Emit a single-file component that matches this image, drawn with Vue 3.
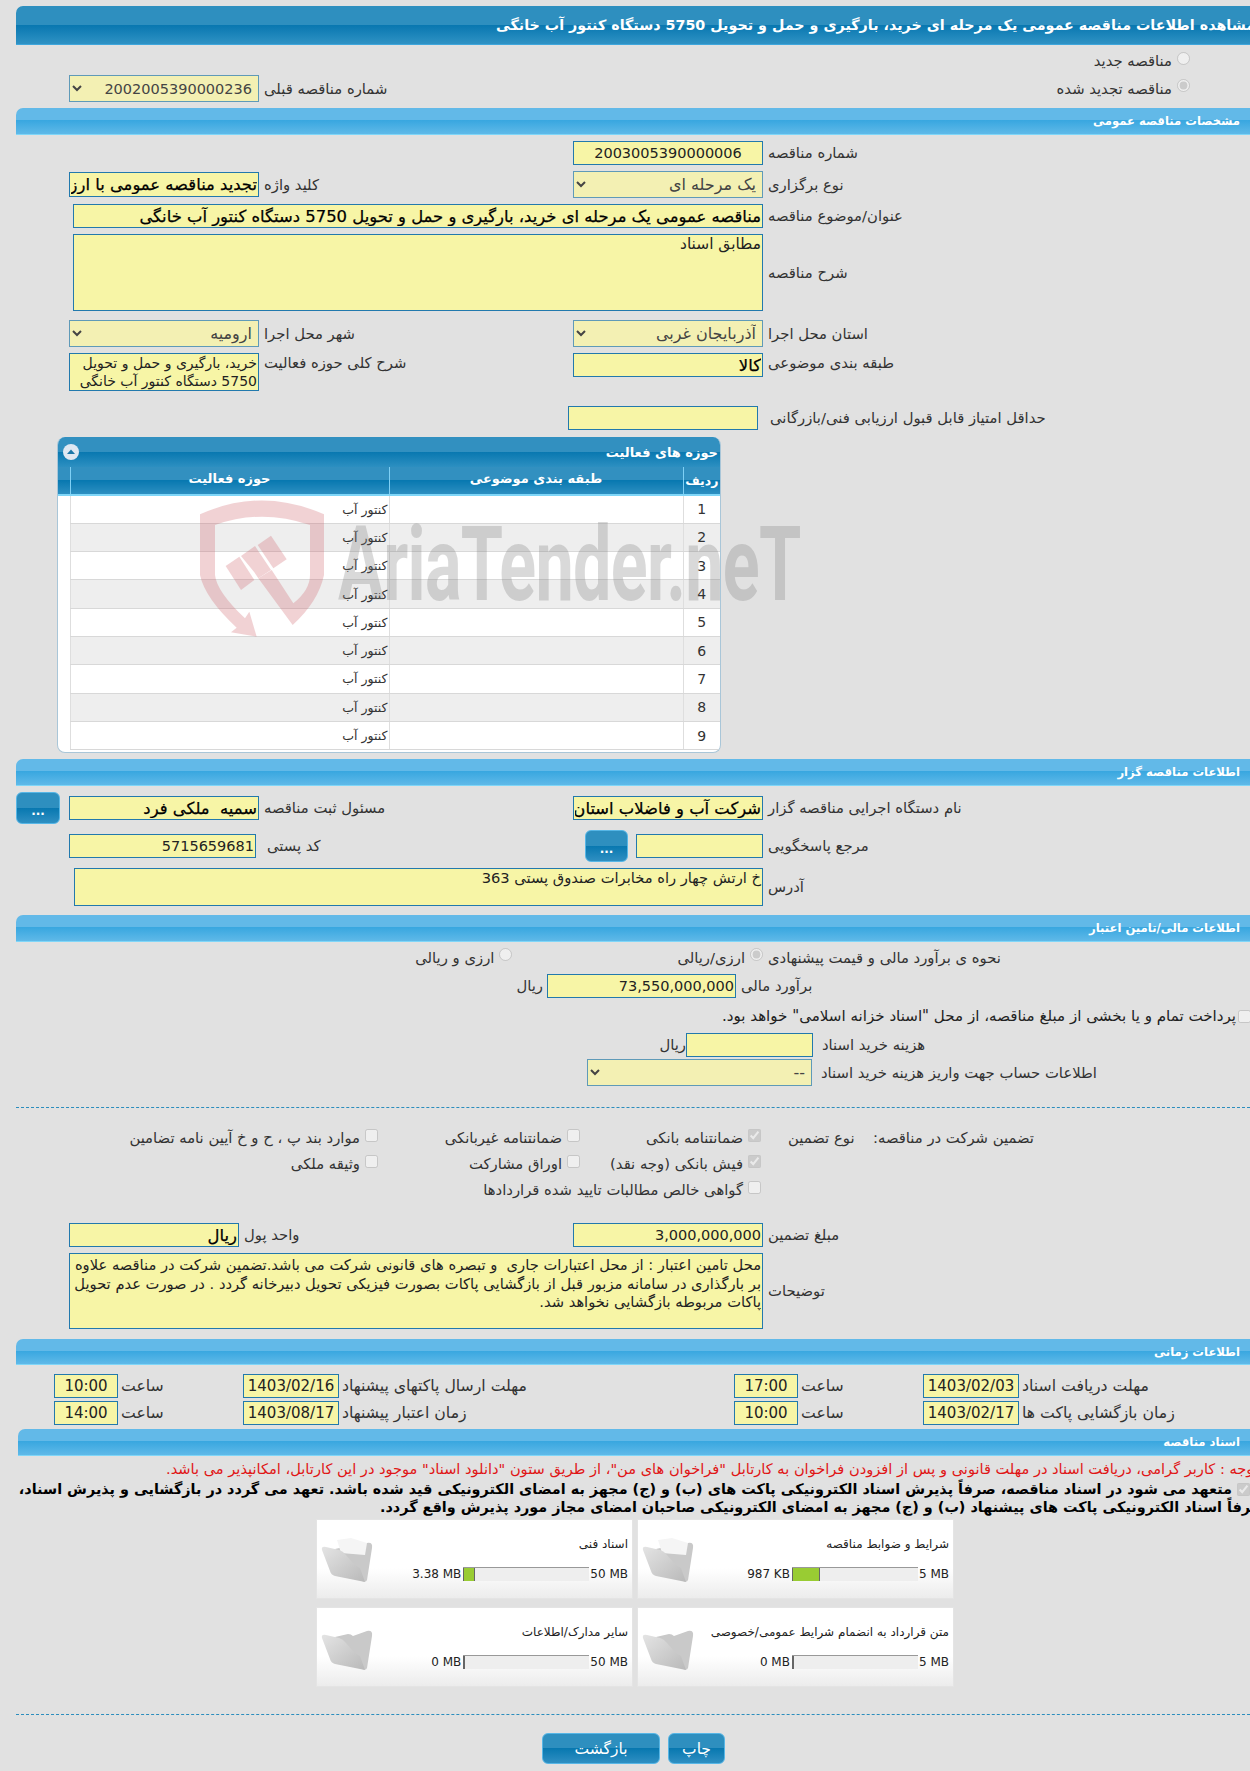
<script setup>
const rows = [1, 2, 3, 4, 5, 6, 7, 8, 9]
const cards = [
  [
    { title: 'شرایط و ضوابط مناقصه', used: '987 KB', max: '5 MB', fill: 26, paper: true },
    { title: 'اسناد فنی', used: '3.38 MB', max: '50 MB', fill: 10, paper: true }
  ],
  [
    { title: 'متن قرارداد به انضمام شرایط عمومی/خصوصی', used: '0 MB', max: '5 MB', fill: 0, paper: false },
    { title: 'سایر مدارک/اطلاعات', used: '0 MB', max: '50 MB', fill: 0, paper: false }
  ]
]
</script>

<template>
  <div class="page">
    <div class="wm">
      <svg class="shield" viewBox="0 0 420 450">
        <path d="M15 58Q200 -25 387 58L387 240Q370 320 293 390L190 250L230 225L295 325Q345 285 345 240L345 90Q200 40 60 90L60 240Q65 290 150 370L163 350L185 425L108 412L125 398Q30 310 15 240Z" />
        <path d="M92 213L133 185L178 255L138 285Z" />
        <path d="M138 183L180 153L228 225L190 250L178 232Z" />
        <path d="M188 150L228 122L275 193L235 220Z" />
      </svg>
      <span class="wmtext">AriaTender.neT</span>
    </div>

    <div class="titlebar"><span dir="rtl">مشاهده اطلاعات مناقصه عمومی یک مرحله ای خرید، بارگیری و حمل و تحویل 5750 دستگاه کنتور آب خانگی</span></div>

    <div class="row mt2 h28">
      <label class="opt pushr" dir="rtl"><input type="radio" name="a" disabled /><span>مناقصه جدید</span></label>
    </div>
    <div class="row h27">
      <select class="sel digits w190 ml53" dir="rtl" disabled><option>2002005390000236</option></select>
      <span class="lbl">شماره مناقصه قبلی</span>
      <label class="opt pushr" dir="rtl"><input type="radio" name="a" checked disabled /><span>مناقصه تجدید شده</span></label>
    </div>

    <div class="bar mt6"><span dir="rtl">مشخصات مناقصه عمومی</span></div>

    <div class="row mt6 h24">
      <div class="rf"><input class="inp center w190" dir="rtl" value="2003005390000006" readonly /></div>
      <span class="lbl">شماره مناقصه</span>
    </div>
    <div class="row mt6 h27">
      <div class="rf split">
        <div class="lg"><input class="inp strong w190 h25" dir="rtl" value="تجدید مناقصه عمومی با ارز" readonly /><span class="lbl">کلید واژه</span></div>
        <select class="sel w190" dir="rtl" disabled><option>یک مرحله ای</option></select>
      </div>
      <span class="lbl">نوع برگزاری</span>
    </div>
    <div class="row mt6 h24">
      <div class="rf"><input class="inp strong w690" dir="rtl" value="مناقصه عمومی یک مرحله ای خرید، بارگیری و حمل و تحویل 5750 دستگاه کنتور آب خانگی" readonly /></div>
      <span class="lbl">عنوان/موضوع مناقصه</span>
    </div>
    <div class="row mt6 h77">
      <div class="rf"><textarea class="ta big w690 h77" dir="rtl" readonly>مطابق اسناد</textarea></div>
      <span class="lbl">شرح مناقصه</span>
    </div>
    <div class="row mt9 h27">
      <div class="rf split">
        <div class="lg"><select class="sel w190" dir="rtl" disabled><option>ارومیه</option></select><span class="lbl">شهر محل اجرا</span></div>
        <select class="sel w190" dir="rtl" disabled><option>آذربایجان غربی</option></select>
      </div>
      <span class="lbl">استان محل اجرا</span>
    </div>
    <div class="row top mt6 h38">
      <div class="rf split top">
        <div class="lg top"><textarea class="ta sm w190 h38" dir="rtl" readonly>خرید، بارگیری و حمل و تحویل 5750 دستگاه کنتور آب خانگی</textarea><span class="lbl">شرح کلی حوزه فعالیت</span></div>
        <input class="inp strong w190" dir="rtl" value="کالا" readonly />
      </div>
      <span class="lbl">طبقه بندی موضوعی</span>
    </div>
    <div class="row mt15 h24">
      <input class="inp w190 ml552" dir="rtl" readonly />
      <span class="lbl ml12">حداقل امتیاز قابل قبول ارزیابی فنی/بازرگانی</span>
    </div>

    <div class="panel">
      <div class="phead">
        <span class="toggle"><svg viewBox="0 0 16 16" width="16" height="16"><circle cx="8" cy="8" r="8" fill="#dfe8f2" /><path d="M4 10L8 5.5L12 10Z" fill="#1b76a8" /></svg></span>
        <span dir="rtl">حوزه های فعالیت</span>
      </div>
      <table dir="rtl" class="tbl">
        <thead>
          <tr><th class="c1">ردیف</th><th class="c2">طبقه بندی موضوعی</th><th class="c3">حوزه فعالیت</th><th class="c4"></th></tr>
        </thead>
        <tbody>
          <tr v-for="r in rows" :key="r">
            <td class="num">{{ r }}</td><td></td><td>کنتور آب</td><td class="empty"></td>
          </tr>
        </tbody>
      </table>
    </div>

    <div class="bar mt6"><span dir="rtl">اطلاعات مناقصه گزار</span></div>

    <div class="row mt6 h32">
      <div class="rf split nopad">
        <div class="lg">
          <button class="btn dots">...</button>
          <input class="inp strong w190 ml9" dir="rtl" value="سمیه  ملکی فرد" readonly /><span class="lbl">مسئول ثبت مناقصه</span>
        </div>
        <input class="inp strong w190" dir="rtl" value="شرکت آب و فاضلاب استان" readonly />
      </div>
      <span class="lbl">نام دستگاه اجرایی مناقصه گزار</span>
    </div>
    <div class="row mt6 h32">
      <div class="rf split">
        <div class="lg"><input class="inp w187" dir="rtl" value="5715659681" readonly /><span class="lbl ml11">کد پستی</span></div>
        <div class="lg"><button class="btn dots dots2">...</button><input class="inp w127 ml8" dir="rtl" readonly /></div>
      </div>
      <span class="lbl">مرجع پاسخگویی</span>
    </div>
    <div class="row mt6 h38">
      <div class="rf"><textarea class="ta w689 h38" dir="rtl" readonly>خ ارتش چهار راه مخابرات صندوق پستی 363</textarea></div>
      <span class="lbl">آدرس</span>
    </div>

    <div class="bar mt9"><span dir="rtl">اطلاعات مالی/تامین اعتبار</span></div>

    <div class="row h31">
      <div class="rf end">
        <label class="opt" dir="rtl"><input type="radio" name="c" disabled /><span>ارزی و ریالی</span></label>
        <label class="opt ml165" dir="rtl"><input type="radio" name="c" checked disabled /><span>ارزی/ریالی</span></label>
      </div>
      <span class="lbl">نحوه ی برآورد مالی و قیمت پیشنهادی</span>
    </div>
    <div class="row h25">
      <span class="lbl rial ml503">ریال</span>
      <input class="inp w189 ml4" dir="rtl" value="73,550,000,000" readonly />
      <span class="lbl">برآورد مالی</span>
    </div>
    <div class="row mt3 h30 rtlrow" dir="rtl">
      <input class="cb shift" type="checkbox" disabled />
      <span class="lbl nom">پرداخت تمام و یا بخشی از مبلغ مناقصه، از محل "اسناد خزانه اسلامی" خواهد بود.</span>
    </div>
    <div class="row mt2 h24">
      <span class="lbl rial ml646">ریال</span>
      <input class="inp w127" dir="rtl" readonly />
      <span class="lbl ml9">هزینه خرید اسناد</span>
    </div>
    <div class="row mt2 h27">
      <select class="sel w225 ml571" dir="rtl" disabled><option>--</option></select>
      <span class="lbl ml9">اطلاعات حساب جهت واریز هزینه خرید اسناد</span>
    </div>

    <div class="dash mt21"></div>

    <div class="guar mt17">
      <label class="opt" dir="rtl"><input class="cb" type="checkbox" disabled /><span>موارد بند پ ، ح و خ آیین نامه تضامین</span></label>
      <label class="opt" dir="rtl"><input class="cb" type="checkbox" disabled /><span>ضمانتنامه غیربانکی</span></label>
      <label class="opt" dir="rtl"><input class="cb" type="checkbox" checked disabled /><span>ضمانتنامه بانکی</span></label>
      <span class="lbl type">نوع تضمین</span>
      <span class="lbl ctype">تضمین شرکت در مناقصه:</span>
    </div>
    <div class="guar">
      <label class="opt" dir="rtl"><input class="cb" type="checkbox" disabled /><span>وثیقه ملکی</span></label>
      <label class="opt" dir="rtl"><input class="cb" type="checkbox" disabled /><span>اوراق مشارکت</span></label>
      <label class="opt" dir="rtl"><input class="cb" type="checkbox" checked disabled /><span>فیش بانکی (وجه نقد)</span></label>
    </div>
    <div class="guar">
      <span></span><span></span>
      <label class="opt" dir="rtl"><input class="cb" type="checkbox" disabled /><span>گواهی خالص مطالبات تایید شده قراردادها</span></label>
    </div>

    <div class="row mt20 h24">
      <div class="rf split">
        <div class="lg"><input class="inp strong w170" dir="rtl" value="ریال" readonly /><span class="lbl">واحد پول</span></div>
        <input class="inp w190" dir="rtl" value="3,000,000,000" readonly />
      </div>
      <span class="lbl">مبلغ تضمین</span>
    </div>
    <div class="row mt6 h76">
      <div class="rf"><textarea class="ta tdesc h76" dir="rtl" readonly>محل تامین اعتبار : از محل اعتبارات جاری  و تبصره های قانونی شرکت می باشد.تضمین شرکت در مناقصه علاوه بر بارگذاری در سامانه مزبور قبل از بازگشایی پاکات بصورت فیزیکی تحویل دبیرخانه گردد . در صورت عدم تحویل پاکات مربوطه بازگشایی نخواهد شد.</textarea></div>
      <span class="lbl">توضیحات</span>
    </div>

    <div class="bar mt10 h26"><span dir="rtl">اطلاعات زمانی</span></div>

    <div class="time mt9">
      <input class="inp tinp" value="10:00" readonly /><span class="lbl">ساعت</span>
      <input class="inp tinp" value="1403/02/16" readonly /><span class="lbl">مهلت ارسال پاکتهای پیشنهاد</span>
      <input class="inp tinp" value="17:00" readonly /><span class="lbl">ساعت</span>
      <input class="inp tinp" value="1403/02/03" readonly /><span class="lbl">مهلت دریافت اسناد</span>
    </div>
    <div class="time mt3">
      <input class="inp tinp" value="14:00" readonly /><span class="lbl">ساعت</span>
      <input class="inp tinp" value="1403/08/17" readonly /><span class="lbl">زمان اعتبار پیشنهاد</span>
      <input class="inp tinp" value="10:00" readonly /><span class="lbl">ساعت</span>
      <input class="inp tinp" value="1403/02/17" readonly /><span class="lbl">زمان بازگشایی پاکت ها</span>
    </div>

    <div class="bar mt4 ml2"><span dir="rtl">اسناد مناقصه</span></div>

    <div class="note red"><span dir="rtl">توجه : کاربر گرامی، دریافت اسناد در مهلت قانونی و پس از افزودن فراخوان به کارتابل "فراخوان های من"، از طریق ستون "دانلود اسناد" موجود در این کارتابل، امکانپذیر می باشد.</span></div>
    <div class="note b1" dir="rtl">
      <input class="cb" type="checkbox" checked disabled />
      <span>متعهد می شود در اسناد مناقصه، صرفاً پذیرش اسناد الکترونیکی پاکت های (ب) و (ج) مجهز به امضای الکترونیکی قید شده باشد. تعهد می گردد در بازگشایی و پذیرش اسناد،</span>
    </div>
    <div class="note b2"><span dir="rtl">صرفاً اسناد الکترونیکی پاکت های پیشنهاد (ب) و (ج) مجهز به امضای الکترونیکی صاحبان امضای مجاز مورد پذیرش واقع گردد.</span></div>

    <div class="cards">
      <div v-for="(line, i) in cards" :key="i" class="cardrow">
        <div v-for="c in line.slice().reverse()" :key="c.title" class="card">
          <svg class="folder" viewBox="0 0 52 46">
            <defs>
              <linearGradient :id="'fg' + i + c.fill" x1="0" y1="0" x2="1" y2="1">
                <stop offset="0" stop-color="#e4e4e4" /><stop offset="1" stop-color="#b9b9b9" />
              </linearGradient>
            </defs>
            <path d="M14 12L27 9Q30 9 32 11L46 6Q52 5 51 11L46 43Q45 46 41 44Z" fill="#c9c9c9" />
            <path v-if="c.paper" d="M16 3L30 1L46 6L44 18L20 16Z" fill="#f5f5f5" />
            <path d="M1 13Q0 9 5 10L18 13Q22 14 25 18L31 25Q35 29 39 31L44 45L14 39Q10 38 9 34Z" :fill="'url(#fg' + i + c.fill + ')'" />
          </svg>
          <div class="cbody">
            <div class="ctitle" dir="rtl">{{ c.title }}</div>
            <div class="prog">
              <span class="size">{{ c.used }}</span>
              <span class="track"><span class="fillbar" :style="{ width: c.fill + 'px' }"></span></span>
              <span class="size max">{{ c.max }}</span>
            </div>
          </div>
        </div>
      </div>
    </div>

    <div class="dash mt27"></div>

    <div class="actions">
      <button class="btn act wide" dir="rtl">بازگشت</button>
      <button class="btn act" dir="rtl">چاپ</button>
    </div>
  </div>
</template>

<style>
html, body { margin: 0; background: #e1e1e1; overflow-x: hidden; }
</style>

<style scoped>
.page { position: relative; width: 1234px; height: 1771px; margin-left: 16px; padding-top: 6px; box-sizing: border-box; overflow: hidden; background: #e1e1e1; font-family: "DejaVu Sans", "Noto Sans", sans-serif; font-size: 14.8px; color: #333; }

.wm { position: absolute; left: -16px; top: 0; width: 1250px; height: 700px; pointer-events: none; z-index: 3; }
.shield { position: absolute; left: 195px; top: 495px; width: 140px; height: 150px; fill: #cf5f68; opacity: .28; }
.wmtext { position: absolute; left: 338px; top: 510px; font-family: Roboto, "DejaVu Sans", sans-serif; font-weight: 700; font-size: 104px; line-height: 110px; color: #777; opacity: .27; white-space: nowrap; transform-origin: left center; transform: scaleX(.656); letter-spacing: -1px; }

.titlebar { height: 39px; display: flex; align-items: center; padding-left: 480px; box-sizing: border-box; border-radius: 7px 0 0 0; color: #fff; font-size: 14.3px; font-weight: 700; white-space: nowrap; background: linear-gradient(#2e8fbf 0, #2e8fbf 50%, #0877b0 50%, #2f92c4 100%); border-bottom: 1px solid #3ea6dc; }
.bar { height: 27px; box-sizing: border-box; display: flex; align-items: center; justify-content: flex-end; padding-right: 10px; border-radius: 7px 0 0 0; color: #fff; font-size: 11.6px; font-weight: 700; white-space: nowrap; background: linear-gradient(#62b9e8 0, #62b9e8 48%, #39a7e0 48%, #5fb9e8 100%); border-bottom: 1px solid #7fd6f8; }
.h26 { height: 26px; }

.row { display: flex; align-items: center; }
.row.top { align-items: flex-start; }
.rf { width: 747px; flex: none; display: flex; align-items: center; justify-content: flex-end; box-sizing: border-box; padding-left: 53px; }
.rf.split { justify-content: space-between; }
.rf.end { justify-content: flex-end; }
.rf.top { align-items: flex-start; }
.rf.nopad { padding-left: 0; }
.lg { display: flex; align-items: center; }
.lg.top { align-items: flex-start; }

.lbl { margin-left: 5px; white-space: nowrap; line-height: 18px; direction: rtl; }
.top .lbl { margin-top: 1px; }
.nom { margin: 0 2px 0 0; color: #222; font-size: 15.1px; }
.rial { width: 24px; flex: none; text-align: left; }

.inp, .ta, .sel { box-sizing: border-box; font-family: "DejaVu Sans", sans-serif; color: #222; outline: none; border-radius: 0; }
.inp { height: 24px; border: 1px solid #2279ad; background: #f7f5a6; font-size: 14.5px; padding: 0 1px; margin: 0; }
.center { text-align: center; }
.strong { font-size: 16.4px; color: #000; -webkit-text-stroke: .25px #000; }
.ta { border: 1px solid #2279ad; background: #f7f5a6; font-size: 14.7px; line-height: 18px; padding: 0 1px; margin: 0; resize: none; overflow: hidden; display: block; }
.ta.big { font-size: 15.4px; }
.ta.sm { font-size: 14px; }
.tdesc { width: 698px; line-height: 18.5px; padding-top: 2px; }
.sel { height: 27px; border: 1px solid #5f9ab8; background-color: #f3f0b3; color: #444; font-size: 16px; opacity: 1; padding: 0 2px; margin: 0; }
.digits { font-size: 14.5px; }

.w190 { width: 190px; } .w187 { width: 187px; } .w189 { width: 189px; } .w170 { width: 170px; }
.w127 { width: 127px; } .w225 { width: 225px; } .w690 { width: 690px; } .w689 { width: 689px; }
.h24 { height: 24px; } .h25 { height: 25px; } .h27 { height: 27px; } .h28 { height: 28px; } .h30 { height: 30px; } .h31 { height: 31px; } .h32 { height: 32px; }
.h38 { height: 38px; } .h76 { height: 76px; } .h77 { height: 77px; }
.mt2 { margin-top: 2px; } .mt3 { margin-top: 3px; } .mt4 { margin-top: 4px; } .mt6 { margin-top: 6px; } .mt9 { margin-top: 9px; } .mt10 { margin-top: 10px; }
.mt15 { margin-top: 15px; } .mt17 { margin-top: 17px; } .mt20 { margin-top: 20px; } .mt21 { margin-top: 21px; } .mt27 { margin-top: 27px; }
.ml2 { margin-left: 2px; } .ml4 { margin-left: 4px; } .ml8 { margin-left: 8px; } .ml9 { margin-left: 9px; } .ml11 { margin-left: 11px; } .ml12 { margin-left: 12px; } .ml53 { margin-left: 53px; }
.ml165 { margin-left: 165px; } .ml503 { margin-left: 503px; } .ml552 { margin-left: 552px; } .ml571 { margin-left: 571px; } .ml646 { margin-left: 646px; }

.opt { display: inline-flex; align-items: center; gap: 5px; white-space: nowrap; line-height: 18px; }
.opt input { margin: 0 0 6px; flex: none; width: 13px; height: 13px; }
.pushr { margin-left: auto; margin-right: 60px; }
.cb { margin: 0; width: 13px; height: 13px; flex: none; }
.shift { margin-right: -1px; }
.rtlrow { width: 1234px; }

.panel { position: relative; width: 664px; height: 316px; margin: 7px 0 0 41px; box-sizing: border-box; background: #fff; border: 1px solid #a9c6d8; border-top: 0; border-radius: 8px; overflow: hidden; }
.phead { height: 30px; display: flex; align-items: center; justify-content: space-between; padding: 0 2px 0 5px; color: #fff; font-weight: 700; font-size: 13px; background: linear-gradient(#3290c0 0, #3290c0 50%, #0878b0 50%, #2d8fc1 100%); }
.toggle { display: flex; }
.tbl { width: 662px; border-collapse: collapse; table-layout: fixed; font-size: 12.5px; }
.tbl th { height: 28px; padding: 0 0 4px; color: #fff; font-size: 13px; font-weight: 700; background: linear-gradient(#3290c0 0, #3290c0 50%, #0878b0 50%, #2d8fc1 100%); border-left: 1px solid #7fd0f5; border-bottom: 2px solid #7fd6f8; box-sizing: border-box; }
.tbl th:last-child { border-left: 0; }
.tbl th.c1 { font-size: 12.5px; padding: 0; }
.c1 { width: 37px; } .c2 { width: 294px; } .c3 { width: 319px; } .c4 { width: 12px; }
.tbl td { height: 28.3px; padding: 0 1px; border-left: 1px solid #dedede; border-bottom: 1px solid #d8d8d8; box-sizing: border-box; color: #333; text-align: right; }
.tbl td:last-child { border-left: 0; }
.tbl td.empty { border-bottom: 0; }
.tbl .num { text-align: center; font-size: 14px; }
.tbl tr:nth-child(even) td:not(.empty) { background: #eee; }

.btn { box-sizing: border-box; border: 1px solid #56b6e6; border-radius: 6px; color: #fff; font-family: "DejaVu Sans", sans-serif; cursor: pointer; padding: 0; background: linear-gradient(#2e8fbf 0, #2e8fbf 50%, #0878b0 50%, #2f8fc2 100%); }
.dots { width: 44px; height: 32px; font-size: 12px; font-weight: 700; padding-top: 6px; line-height: 14px; }
.dots2 { width: 43px; }

.dash { height: 0; border-top: 1px dashed #2c8dbd; }

.guar { display: grid; grid-template-columns: 362px 202px 181px 12px 100px auto; justify-items: end; align-items: center; height: 26px; }
.type { grid-column: 5; margin-left: 15px; justify-self: start; }
.ctype { grid-column: 6; margin-left: 0; justify-self: start; }

.time { display: grid; grid-template-columns: 38px 64px 125px 96px 395px 64px 125px 96px 1fr; align-items: center; height: 24px; }
.time .inp { padding: 0 2px; font-size: 15px; text-align: center; width: 100%; }
.time .inp:nth-child(1) { grid-column: 2; }
.time .lbl { margin-left: 3px; justify-self: start; font-size: 15.7px; }

.note { white-space: nowrap; display: flex; align-items: center; }
.red { height: 19px; margin-top: 3px; padding-left: 150px; color: #e01515; font-size: 14.6px; }
.b1, .b2 { color: #000; font-weight: 700; font-size: 14.4px; height: 18px; }
.b1 { margin-top: 2px; width: 1234px; gap: 5px; justify-content: flex-start; }
.b2 { padding-left: 364px; }

.cards { margin: 3px 0 0 300px; display: flex; flex-direction: column; gap: 8px; }
.cardrow { display: flex; gap: 4px; }
.card { width: 317px; height: 80px; box-sizing: border-box; display: flex; border: 1px solid #e4e4e4; background: linear-gradient(#fff 0, #fff 62%, #ececec 100%); }
.folder { width: 52px; height: 46px; margin: 17px 0 0 4px; flex: none; }
.cbody { flex: 1; padding: 16px 4px 0 0; }
.ctitle { font-size: 12px; line-height: 16px; color: #222; text-align: right; white-space: nowrap; }
.prog { display: flex; align-items: center; justify-content: flex-end; margin-top: 15px; }
.size { font-size: 12px; color: #222; white-space: nowrap; margin-right: 2px; }
.max { margin: 0 0 0 1px; }
.track { width: 126px; height: 14px; box-sizing: border-box; background: #eee; border-top: 1px solid #999; display: block; }
.fillbar { display: block; height: 13px; box-sizing: content-box; background: #99cc33; border-left: 1px solid #666; border-right: 1px solid #666; }

.actions { display: flex; justify-content: flex-start; gap: 8px; margin: 18px 0 0 526px; }
.act { width: 57px; height: 31px; font-size: 15.5px; }
.wide { width: 118px; }
</style>
